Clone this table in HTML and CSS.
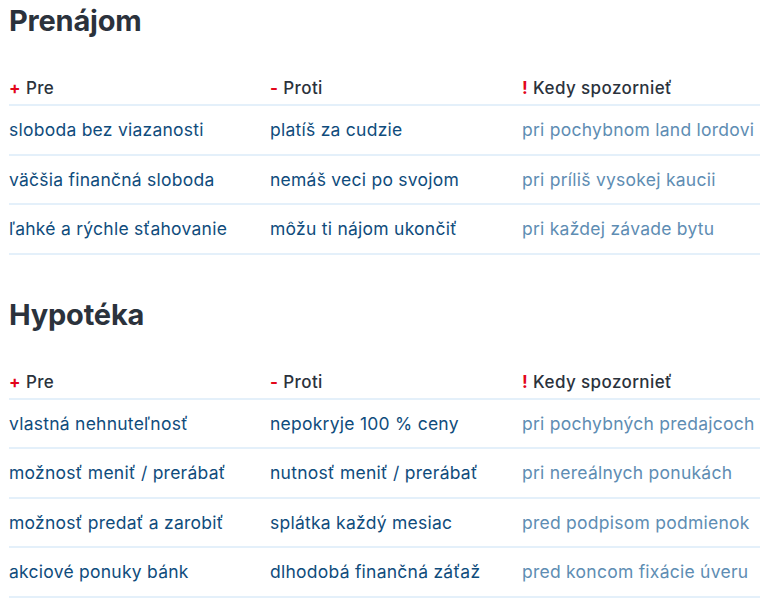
FILE: index.html
```html
<!DOCTYPE html>
<html lang="sk">
<head>
<meta charset="utf-8">
<link rel="stylesheet" href="styles.css">
</head>
<body>
<section class="block">
  <h2 class="title">Prenájom</h2>
  <table class="cmp">
    <thead>
      <tr><th><span class="mark">+</span> Pre</th><th><span class="mark">-</span> Proti</th><th><span class="mark">!</span> Kedy spozornieť</th></tr>
    </thead>
    <tbody>
      <tr><td>sloboda bez viazanosti</td><td>platíš za cudzie</td><td class="warn">pri pochybnom land lordovi</td></tr>
      <tr><td>väčšia finančná sloboda</td><td>nemáš veci po svojom</td><td class="warn">pri príliš vysokej kaucii</td></tr>
      <tr><td>ľahké a rýchle sťahovanie</td><td>môžu ti nájom ukončiť</td><td class="warn">pri každej závade bytu</td></tr>
    </tbody>
  </table>
</section>
<section class="block second">
  <h2 class="title">Hypotéka</h2>
  <table class="cmp">
    <thead>
      <tr><th><span class="mark">+</span> Pre</th><th><span class="mark">-</span> Proti</th><th><span class="mark">!</span> Kedy spozornieť</th></tr>
    </thead>
    <tbody>
      <tr><td>vlastná nehnuteľnosť</td><td>nepokryje 100 % ceny</td><td class="warn">pri pochybných predajcoch</td></tr>
      <tr><td>možnosť meniť / prerábať</td><td>nutnosť meniť / prerábať</td><td class="warn">pri nereálnych ponukách</td></tr>
      <tr><td>možnosť predať a zarobiť</td><td>splátka každý mesiac</td><td class="warn">pred podpisom podmienok</td></tr>
      <tr><td>akciové ponuky bánk</td><td>dlhodobá finančná záťaž</td><td class="warn">pred koncom fixácie úveru</td></tr>
    </tbody>
  </table>
</section>
</body>
</html>
```
FILE: styles.css
```css
html, body {
  margin: 0;
  padding: 0;
  background: #ffffff;
}
body {
  font-family: Inter, "Noto Sans", sans-serif;
  padding: 0 10px 0 9px;
}
.block {
  display: block;
}
.title {
  margin: 0;
  padding-top: 3px;
  height: 52px;
  font-size: 29px;
  font-weight: 700;
  line-height: 36px;
  color: #2b323c;
  letter-spacing: -0.2px;
}
.second {
  margin-top: 39px;
}
.cmp {
  width: 751px;
  border-collapse: collapse;
  table-layout: fixed;
}
.cmp th:nth-child(1) { width: 261px; }
.cmp th:nth-child(2) { width: 252px; }
.cmp th:nth-child(3) { width: 238px; }
.cmp th {
  text-align: left;
  font-size: 17px;
  font-weight: 500;
  letter-spacing: 0.4px;
  color: #2b323c;
  height: 32px;
  padding: 17px 0 0 0;
  vertical-align: middle;
  border-bottom: 2px solid #e4f0fa;
}
.cmp td {
  font-size: 17.5px;
  font-weight: 400;
  letter-spacing: 0.25px;
  color: #0f4c7c;
  height: 47.5px;
  padding: 0;
  vertical-align: middle;
  border-bottom: 2px solid #e4f0fa;
  white-space: nowrap;
}
.cmp td.warn {
  color: #5e8db3;
}
.mark {
  color: #e3061a;
  font-weight: 700;
}
```
